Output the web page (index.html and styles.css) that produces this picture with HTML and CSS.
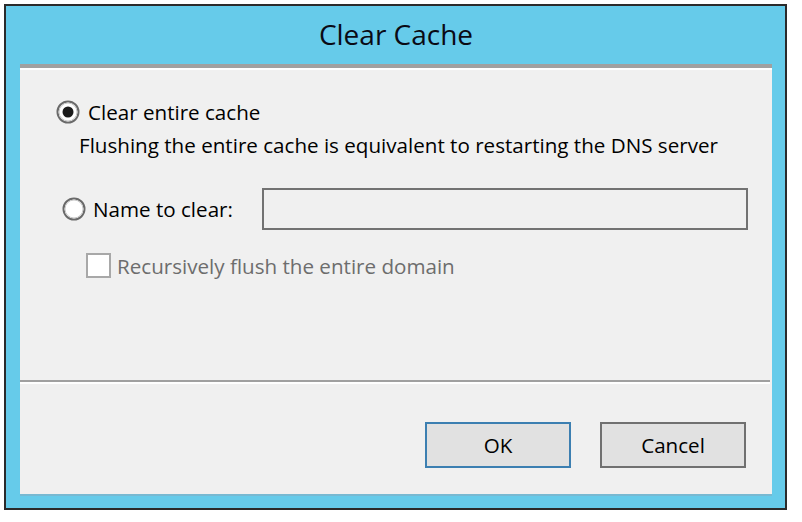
FILE: index.html
```html
<!DOCTYPE html>
<html>
<head>
<meta charset="utf-8">
<link rel="stylesheet" href="styles.css">
</head>
<body>
<div class="window">
  <div class="title">Clear Cache</div>
  <div class="panel">
    <div class="options">
      <div class="row row-first">
        <svg class="radio" width="24" height="24" viewBox="0 0 24 24"><circle cx="12" cy="12" r="10.5" fill="#fff" stroke="#6a6a6a" stroke-width="2"/><circle cx="12" cy="12" r="9" fill="none" stroke="#c8c8c8" stroke-width="1"/><circle cx="12" cy="12" r="5.5" fill="#1b1b1b"/></svg>
        <span class="label">Clear entire cache</span>
      </div>
      <div class="desc">Flushing the entire cache is equivalent to restarting the DNS server</div>
      <div class="row row-name">
        <svg class="radio" width="24" height="24" viewBox="0 0 24 24"><circle cx="12" cy="12" r="10.5" fill="#fff" stroke="#6a6a6a" stroke-width="2"/><circle cx="12" cy="12" r="9" fill="none" stroke="#c8c8c8" stroke-width="1"/></svg>
        <span class="label">Name to clear:</span>
        <div class="input"></div>
      </div>
      <div class="row row-check">
        <span class="check"></span>
        <span class="label disabled">Recursively flush the entire domain</span>
      </div>
    </div>
    <div class="separator"></div>
    <div class="buttons">
      <button class="btn btn-default">OK</button>
      <button class="btn">Cancel</button>
    </div>
  </div>
</div>
</body>
</html>
```
FILE: styles.css
```css
* { box-sizing: border-box; }
html, body { margin: 0; padding: 0; background: #ffffff; }
body {
  font-family: "Open Sans", "Noto Sans", sans-serif;
  color: #000;
  width: 802px;
  height: 522px;
  overflow: hidden;
}
.window {
  margin: 4px 0 0 4px;
  width: 783px;
  height: 506px;
  border: 2px solid #2b2b2b;
  background: #66cbea;
  display: flex;
  flex-direction: column;
  padding: 0 13px 12px 14px;
}
.title {
  height: 58px;
  flex: none;
  display: flex;
  align-items: center;
  justify-content: center;
  font-size: 28px;
  padding-bottom: 2px;
  color: #0a0a14;
}
.panel {
  flex: 1;
  background: #f0f0f0;
  border-top: 4px solid #a0a0a0;
  border-bottom: 2px solid #78b9d2;
  box-shadow: inset 0 2px 0 #ffffff;
  display: flex;
  flex-direction: column;
}
.options {
  height: 312px;
  flex: none;
  padding: 32px 0 0 36px;
  font-size: 20.6px;
  line-height: 24px;
}
.row {
  display: flex;
  align-items: center;
}
.radio { flex: none; display: block; }
.row-first { height: 24px; }
.row-first .label { margin-left: 8px; }
.desc { margin: 9px 0 0 23px; height: 24px; line-height: 24px; }
.row-name { margin-top: 31px; margin-left: 6px; height: 42px; }
.row-name .label { margin-left: 7px; }
.input {
  margin-left: auto;
  margin-right: 24px;
  width: 486px;
  height: 42px;
  border: 2px solid #727272;
  background: #f0f0f0;
}
.row-check { margin-left: 30px; margin-top: 23px; height: 25px; }
.check {
  width: 25px;
  height: 25px;
  border: 2px solid #a8a8a8;
  background: #fff;
  flex: none;
}
.row-check .label { margin-left: 6px; }
.disabled { color: #6d6d6d; }
.separator {
  height: 4px;
  flex: none;
  margin-right: 2px;
  border-top: 2px solid #a0a0a0;
  border-bottom: 2px solid #ffffff;
}
.buttons {
  flex: 1;
  display: flex;
  justify-content: flex-end;
  align-items: flex-start;
  padding: 38px 26px 0 0;
  gap: 29px;
}
.btn {
  width: 146px;
  height: 46px;
  background: #e1e1e1;
  border: 2px solid #707070;
  font-family: "Open Sans", "Noto Sans", sans-serif;
  font-size: 20.6px;
  color: #000;
  padding: 0;
}
.btn-default { border-color: #3c7fb1; }
```
